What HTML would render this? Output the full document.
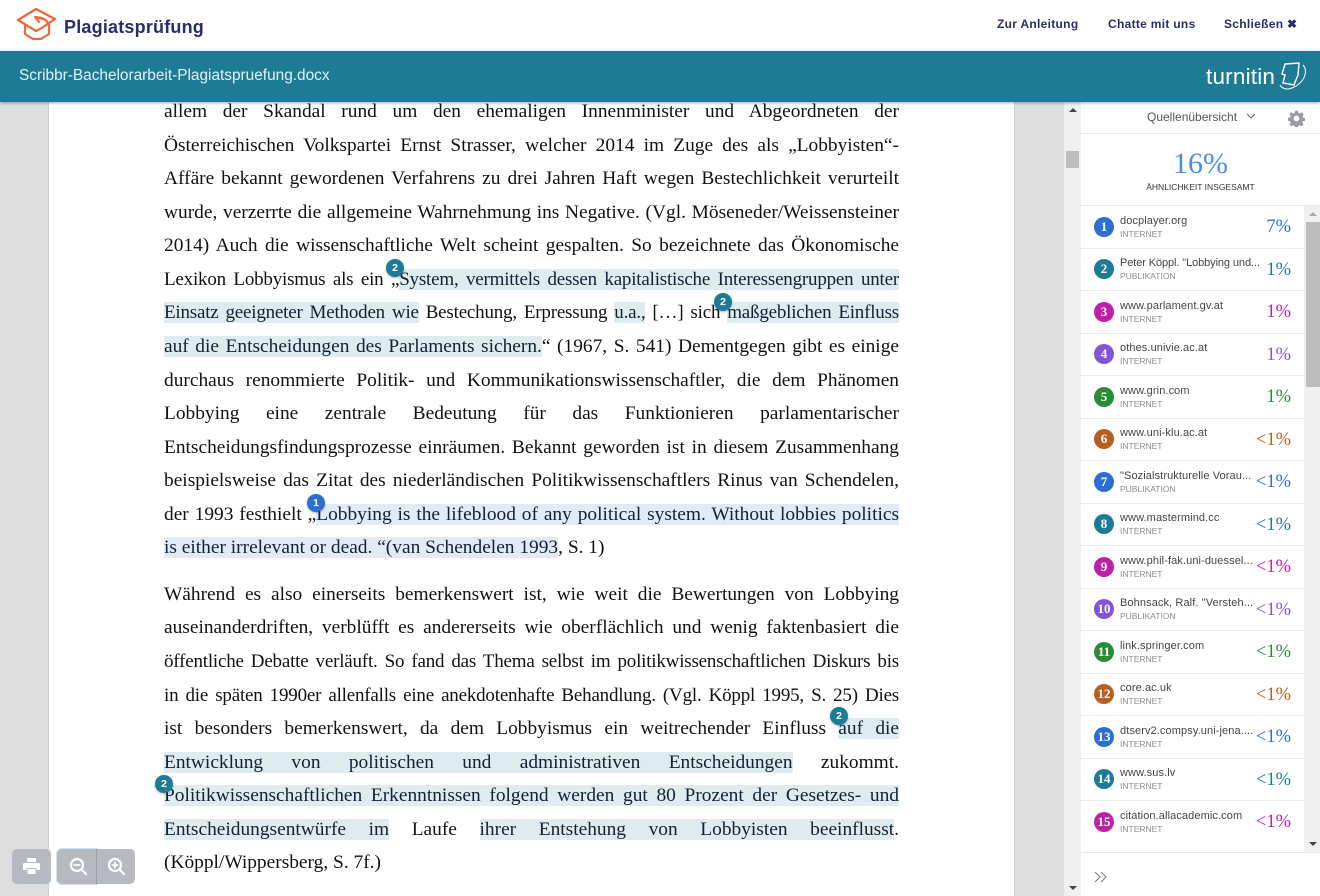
<!DOCTYPE html>
<html lang="de"><head><meta charset="utf-8"><title>Plagiatsprüfung</title>
<style>
*{box-sizing:border-box}
html,body{margin:0;padding:0;width:1320px;height:896px;overflow:hidden;background:#fff;font-family:"Liberation Sans",sans-serif}
.abs{position:absolute}
#nav a{position:absolute;top:16px;font-size:12px;font-weight:700;color:#2a2d6b;letter-spacing:.3px;line-height:16px;white-space:nowrap}
#bar{position:absolute;left:0;top:51px;width:1320px;height:51px;background:#1e7b96;box-shadow:0 1px 3px rgba(0,0,0,.35);z-index:5}
.l{position:absolute;left:164px;width:735px;height:24px;margin-top:1px;font:19.4px/24px "Liberation Serif",serif;color:#111;text-align:justify;text-align-last:justify;white-space:normal}
.l.e{text-align-last:left}
.l.k{font-size:19px;letter-spacing:-.2px}
.h{background:linear-gradient(#deebef,#deebef) 0 50%/100% 21px no-repeat;color:#123}
.h1{background:linear-gradient(#e2e9f7,#e2e9f7) 0 50%/100% 21px no-repeat;color:#123}
.b{position:absolute;width:18px;height:18px;border-radius:50%;background:#1e7b96;color:#fff;font:700 10.5px/18px "Liberation Sans",sans-serif;text-align:center;box-shadow:0 1px 2px rgba(0,0,0,.3);z-index:3}
.r{position:absolute;left:1081px;width:223px;height:41.5px;background:#fff}
.c{position:absolute;left:13px;top:10.500px;width:20px;height:20px;border-radius:50%;color:#fff;font:700 13px/20px "Liberation Serif",serif;text-align:center}
.n{position:absolute;left:39px;top:7.500px;width:142px;font-size:11px;line-height:14px;color:#444;white-space:nowrap;overflow:hidden;letter-spacing:.1px}
.t{position:absolute;left:39px;top:21.500px;font-size:8.5px;line-height:12px;color:#8c8c8c}
.p{position:absolute;right:13px;top:8px;font:18.5px/26px "Liberation Serif",serif;white-space:nowrap}
.btn{position:absolute;top:849px;height:35px;background:#b7b9c0;z-index:6}
</style></head><body>

<svg class="abs" style="left:16px;top:7px" width="42" height="34" viewBox="0 0 42 34" fill="none" stroke="#f2643a" stroke-width="2.2" stroke-linejoin="round" stroke-linecap="round">
<path d="M2 13 L20 2 L39 12 L24 22 L20 24 Z"/>
<path d="M9 18 V27 L17 32 H25 L33 27 V17"/>
<path d="M19 10 L26 11 M19 10 L23 15 M21 11 C28 11 32 14 33 19"/>
</svg>
<div class="abs" style="left:64px;top:15px;font-size:18px;line-height:24px;font-weight:700;color:#2a2d6b;letter-spacing:.2px">Plagiatsprüfung</div>
<div id="nav">
<a style="left:997px">Zur Anleitung</a>
<a style="left:1108px">Chatte mit uns</a>
<a style="left:1224px">Schließen ✖</a>
</div>

<div id="bar">
<div class="abs" style="left:19px;top:15px;font-size:15.4px;line-height:20px;color:#e3f1f5">Scribbr-Bachelorarbeit-Plagiatspruefung.docx</div>
<div class="abs" style="left:1206px;top:12px;font-size:22.5px;line-height:28px;color:#fff;letter-spacing:.2px">turnitin</div>
<svg class="abs" style="left:1279px;top:11px" width="30" height="30" viewBox="0 0 30 30" fill="none" stroke="#fff" stroke-width="1.2">
<path d="M6 2 L20 1 L19 13 L15 23 L4 21 L6 13 L3 12 Z" stroke-width="1.4"/>
<path d="M24 3 C29 8 27 20 13 26 C9 28 3 27 1 23" stroke-width="1"/>
</svg>
</div>

<!-- document area -->
<div class="abs" style="left:0;top:102px;width:48px;height:794px;background:#dedede"></div>
<div class="abs" style="left:48px;top:102px;width:967px;height:794px;background:#fff;border-left:1px solid #d0d0d0;border-right:1px solid #d0d0d0"></div>
<div class="abs" style="left:1015px;top:102px;width:49px;height:794px;background:#dedede"></div>

<div class="l" style="top:99px">allem der Skandal rund um den ehemaligen Innenminister und Abgeordneten der</div>
<div class="l" style="top:133px">Österreichischen Volkspartei Ernst Strasser, welcher 2014 im Zuge des als „Lobbyisten“-</div>
<div class="l" style="top:166px">Affäre bekannt gewordenen Verfahrens zu drei Jahren Haft wegen Bestechlichkeit verurteilt</div>
<div class="l" style="top:200px">wurde, verzerrte die allgemeine Wahrnehmung ins Negative. (Vgl. Möseneder/Weissensteiner</div>
<div class="l" style="top:233px">2014) Auch die wissenschaftliche Welt scheint gespalten. So bezeichnete das Ökonomische</div>
<div class="l k" style="top:267px">Lexikon Lobbyismus als ein „<span class="h">System, vermittels dessen kapitalistische Interessengruppen unter</span></div>
<div class="l k" style="top:300px"><span class="h">Einsatz geeigneter Methoden wie</span> Bestechung, Erpressung <span class="h">u.a.,</span> […] sich <span class="h">maßgeblichen Einfluss</span></div>
<div class="l" style="top:334px"><span class="h">auf die Entscheidungen des Parlaments sichern.</span>“ (1967, S. 541) Dementgegen gibt es einige</div>
<div class="l" style="top:368px">durchaus renommierte Politik- und Kommunikationswissenschaftler, die dem Phänomen</div>
<div class="l" style="top:401px">Lobbying eine zentrale Bedeutung für das Funktionieren parlamentarischer</div>
<div class="l" style="top:435px">Entscheidungsfindungsprozesse einräumen. Bekannt geworden ist in diesem Zusammenhang</div>
<div class="l" style="top:468px">beispielsweise das Zitat des niederländischen Politikwissenschaftlers Rinus van Schendelen,</div>
<div class="l" style="top:502px">der 1993 festhielt „<span class="h1">Lobbying is the lifeblood of any political system. Without lobbies politics</span></div>
<div class="l e" style="top:535px"><span class="h1">is either irrelevant or dead. “(van Schendelen 1993</span>, S. 1)</div>

<div class="l" style="top:582px">Während es also einerseits bemerkenswert ist, wie weit die Bewertungen von Lobbying</div>
<div class="l" style="top:615px">auseinanderdriften, verblüfft es andererseits wie oberflächlich und wenig faktenbasiert die</div>
<div class="l k" style="top:649px">öffentliche Debatte verläuft. So fand das Thema selbst im politikwissenschaftlichen Diskurs bis</div>
<div class="l k" style="top:683px">in die späten 1990er allenfalls eine anekdotenhafte Behandlung. (Vgl. Köppl 1995, S. 25) Dies</div>
<div class="l" style="top:716px">ist besonders bemerkenswert, da dem Lobbyismus ein weitrechender Einfluss <span class="h">auf die</span></div>
<div class="l" style="top:750px"><span class="h">Entwicklung von politischen und administrativen Entscheidungen</span> zukommt.</div>
<div class="l" style="top:783px"><span class="h">Politikwissenschaftlichen Erkenntnissen folgend werden gut 80 Prozent der Gesetzes- und</span></div>
<div class="l" style="top:817px"><span class="h">Entscheidungsentwürfe im</span> Laufe <span class="h">ihrer Entstehung von Lobbyisten beeinflusst</span>.</div>
<div class="l e" style="top:850px">(Köppl/Wippersberg, S. 7f.)</div>

<div class="b" style="left:386px;top:259px">2</div>
<div class="b" style="left:714px;top:293px">2</div>
<div class="b" style="left:307px;top:494px;background:#2d6fd0">1</div>
<div class="b" style="left:830px;top:707px">2</div>
<div class="b" style="left:155px;top:775px">2</div>

<!-- doc scrollbar -->
<div class="abs" style="left:1064px;top:102px;width:17px;height:794px;background:#f0f0f0"></div>
<div class="abs" style="left:1066px;top:151px;width:13px;height:17px;background:#bdbdbd"></div>
<div class="abs" style="left:1069px;top:108px;width:0;height:0;border-left:4px solid transparent;border-right:4px solid transparent;border-bottom:4px solid #444"></div>
<div class="abs" style="left:1069px;top:886px;width:0;height:0;border-left:4px solid transparent;border-right:4px solid transparent;border-top:4px solid #444"></div>

<!-- sidebar -->
<div class="abs" style="left:1081px;top:102px;width:239px;height:794px;background:#fff"></div>
<div class="abs" style="left:1147px;top:109px;font-size:12px;line-height:16px;color:#555">Quellenübersicht</div>
<svg class="abs" style="left:1246px;top:113px" width="10" height="7" viewBox="0 0 10 7" fill="none" stroke="#666" stroke-width="1"><path d="M1 1 L5 5 L9 1"/></svg>
<svg class="abs" style="left:1288px;top:110px" width="17" height="17" viewBox="0 0 24 24"><path fill="#9a9ca3" fill-rule="evenodd" d="M10 1h4l.6 3.2 2 .8L19.3 3.200l2.800 2.800-1.800 2.700.8 2 3 .5v4l-3 .6-.8 2 1.800 2.600-2.800 2.800-2.700-1.800-2 .8-.6 3.100h-4l-.6-3.100-2-.8-2.700 1.800-2.800-2.800 1.800-2.600-.8-2-3-.6v-4l3-.5.8-2L1.900 6l2.800-2.800L7.400 5l2-.8zM12 8a4 4 0 1 0 0 8 4 4 0 0 0 0-8z"/></svg>
<div class="abs" style="left:1081px;top:133px;width:239px;height:1px;background:#ececec"></div>
<div class="abs" style="left:1081px;top:146px;width:239px;text-align:center;font:30px/36px 'Liberation Serif',serif;color:#4a90e2">16%</div>
<div class="abs" style="left:1081px;top:181px;width:239px;text-align:center;font-size:8.5px;line-height:12px;color:#333">ÄHNLICHKEIT INSGESAMT</div>
<div class="abs" style="left:1081px;top:205px;width:239px;height:1px;background:#ececec"></div>

<div class="abs" style="left:1081px;top:206px;width:223px;height:647px;background:#ececec"></div>
<div class="abs" style="left:1304px;top:206px;width:16px;height:647px;background:#f0f0f0"></div>
<div class="abs" style="left:1306px;top:222px;width:14px;height:165px;background:#bdbdbd"></div>
<div class="abs" style="left:1309px;top:212px;width:0;height:0;border-left:4px solid transparent;border-right:4px solid transparent;border-bottom:4px solid #aaa"></div>
<div class="abs" style="left:1309px;top:842px;width:0;height:0;border-left:4px solid transparent;border-right:4px solid transparent;border-top:4px solid #444"></div>

<div class="r" style="top:206px"><div class="c" style="background:#2d6fd0">1</div><div class="n">docplayer.org</div><div class="t">INTERNET</div><div class="p" style="color:#2d6fd0">7%</div></div>
<div class="r" style="top:248.5px"><div class="c" style="background:#1e7b96">2</div><div class="n" style="letter-spacing:-.1px">Peter Köppl. "Lobbying und...</div><div class="t">PUBLIKATION</div><div class="p" style="color:#1e7b96">1%</div></div>
<div class="r" style="top:291px"><div class="c" style="background:#c01fa8">3</div><div class="n">www.parlament.gv.at</div><div class="t">INTERNET</div><div class="p" style="color:#c01fa8">1%</div></div>
<div class="r" style="top:333.5px"><div class="c" style="background:#8454d6">4</div><div class="n">othes.univie.ac.at</div><div class="t">INTERNET</div><div class="p" style="color:#8454d6">1%</div></div>
<div class="r" style="top:376px"><div class="c" style="background:#2a8c35">5</div><div class="n">www.grin.com</div><div class="t">INTERNET</div><div class="p" style="color:#2a8c35">1%</div></div>
<div class="r" style="top:418.5px"><div class="c" style="background:#b85f20">6</div><div class="n">www.uni-klu.ac.at</div><div class="t">INTERNET</div><div class="p" style="color:#b85f20">&lt;1%</div></div>
<div class="r" style="top:461px"><div class="c" style="background:#2d6fd0">7</div><div class="n">"Sozialstrukturelle Vorau...</div><div class="t">PUBLIKATION</div><div class="p" style="color:#2d6fd0">&lt;1%</div></div>
<div class="r" style="top:503.5px"><div class="c" style="background:#1e7b96">8</div><div class="n">www.mastermind.cc</div><div class="t">INTERNET</div><div class="p" style="color:#1e7b96">&lt;1%</div></div>
<div class="r" style="top:546px"><div class="c" style="background:#c01fa8">9</div><div class="n">www.phil-fak.uni-duessel...</div><div class="t">INTERNET</div><div class="p" style="color:#c01fa8">&lt;1%</div></div>
<div class="r" style="top:588.5px"><div class="c" style="background:#8454d6">10</div><div class="n">Bohnsack, Ralf. "Versteh...</div><div class="t">PUBLIKATION</div><div class="p" style="color:#8454d6">&lt;1%</div></div>
<div class="r" style="top:631px"><div class="c" style="background:#2a8c35">11</div><div class="n">link.springer.com</div><div class="t">INTERNET</div><div class="p" style="color:#2a8c35">&lt;1%</div></div>
<div class="r" style="top:673.5px"><div class="c" style="background:#b85f20">12</div><div class="n">core.ac.uk</div><div class="t">INTERNET</div><div class="p" style="color:#b85f20">&lt;1%</div></div>
<div class="r" style="top:716px"><div class="c" style="background:#2d6fd0">13</div><div class="n">dtserv2.compsy.uni-jena....</div><div class="t">INTERNET</div><div class="p" style="color:#2d6fd0">&lt;1%</div></div>
<div class="r" style="top:758.5px"><div class="c" style="background:#1e7b96">14</div><div class="n">www.sus.lv</div><div class="t">INTERNET</div><div class="p" style="color:#1e7b96">&lt;1%</div></div>
<div class="r" style="top:801px"><div class="c" style="background:#c01fa8">15</div><div class="n">citation.allacademic.com</div><div class="t">INTERNET</div><div class="p" style="color:#c01fa8">&lt;1%</div></div>
<div class="abs" style="left:1081px;top:843px;width:223px;height:9px;background:#fff"></div>

<div class="abs" style="left:1081px;top:852px;width:239px;height:44px;background:#fff;border-top:1px solid #e6e6e6"></div>
<svg class="abs" style="left:1094px;top:871px" width="14" height="12" viewBox="0 0 14 12" fill="none" stroke="#777" stroke-width="1"><path d="M1 1 L6 6 L1 11 M7 1 L12 6 L7 11"/></svg>

<!-- toolbar -->
<div class="btn" style="left:12px;width:39px;border-radius:5px">
<svg class="abs" style="left:10px;top:8px" width="19" height="19" viewBox="0 0 19 19"><path fill="#fff" d="M5 1h9v4H5zM2.500 6h14A1.500 1.500 0 0 1 18 7.500V13h-3.500v-2h-10v2H1V7.500A1.500 1.500 0 0 1 2.500 6zM5.500 12h8v5h-8z"/></svg>
</div>
<div class="btn" style="left:57px;width:40px;border-radius:5px 0 0 5px;border-right:1px solid #9da0a8;box-shadow:0 0 0 1px #d3e1f5">
<svg class="abs" style="left:12px;top:8px" width="19" height="19" viewBox="0 0 19 19" fill="none" stroke="#fff" stroke-width="2.200" stroke-linecap="round"><circle cx="8" cy="8" r="6"/><path d="M12.500 12.500 L17 17"/><path d="M5.500 8h5" stroke-width="1.800"/></svg>
</div>
<div class="btn" style="left:97px;width:38px;border-radius:0 5px 5px 0">
<svg class="abs" style="left:10px;top:8px" width="19" height="19" viewBox="0 0 19 19" fill="none" stroke="#fff" stroke-width="2.200" stroke-linecap="round"><circle cx="8" cy="8" r="6"/><path d="M12.500 12.500 L17 17"/><path d="M5.500 8h5M8 5.500v5" stroke-width="1.800"/></svg>
</div>
</body></html>
